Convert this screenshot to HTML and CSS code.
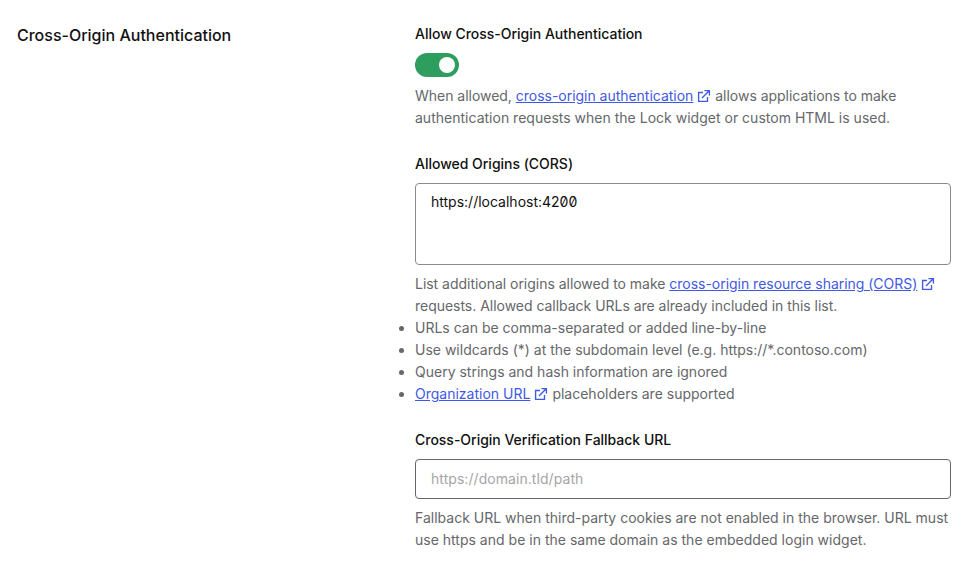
FILE: index.html
```html
<!DOCTYPE html>
<html lang="en">
<head>
<meta charset="utf-8">
<title>Cross-Origin Authentication</title>
<link rel="stylesheet" href="styles.css">
</head>
<body>
<svg width="0" height="0" class="defs"><symbol id="ext" viewBox="0 0 14 14"><path d="M6 3.5H1.6V12.4H10.5V8M7.5 1.6H12.4V6.5M12.2 1.8L5 9" fill="none" stroke="currentColor" stroke-width="1.35" stroke-linejoin="miter"/></symbol></svg>
<main class="section">
  <h2 class="title">Cross-Origin Authentication</h2>
  <div class="fields">
    <section class="field">
      <h3 class="label">Allow Cross-Origin Authentication</h3>
      <div class="switch"><span class="knob"></span></div>
      <p class="help tight">When allowed, <a href="#">cross-origin authentication</a><svg class="ext"><use href="#ext"/></svg>allows applications to make<br><span class="wide">authentication requests when the Lock widget or custom HTML is used.</span></p>
    </section>
    <section class="field">
      <label class="label" for="origins">Allowed Origins (CORS)</label>
      <textarea id="origins" class="input area" spellcheck="false">https://localhost:4200</textarea>
      <p class="help tight">List additional origins allowed to make <a href="#">cross-origin resource sharing (CORS)</a><svg class="ext"><use href="#ext"/></svg><br>requests. Allowed callback URLs are already included in this list.</p>
      <ul class="help list">
        <li>URLs can be comma-separated or added line-by-line</li>
        <li>Use wildcards (*) at the subdomain level (e.g. https://*.contoso.com)</li>
        <li>Query strings and hash information are ignored</li>
        <li><a href="#">Organization URL</a><svg class="ext"><use href="#ext"/></svg>placeholders are supported</li>
      </ul>
    </section>
    <section class="field">
      <label class="label" for="fallback">Cross-Origin Verification Fallback URL</label>
      <input id="fallback" class="input single" placeholder="https://domain.tld/path">
      <p class="help">Fallback URL when third-party cookies are not enabled in the browser. URL must<br><span class="wide">use https and be in the same domain as the embedded login widget.</span></p>
    </section>
  </div>
</main>
</body>
</html>
```
FILE: styles.css
```css
* { box-sizing: border-box; }
body { margin: 0; background: #fff; color: #111; font-family: Inter, sans-serif; font-size: 14px; line-height: 22px; }
.defs { display: block; height: 0; }
.section { display: grid; grid-template-columns: 398px 536px; padding: 23px 0 0 17px; }
.title { margin: 0; font-size: 16px; font-weight: 500; line-height: 24px; }
.fields { display: grid; gap: 24px; }
.label { display: block; margin: 0 0 8px; font-size: 14px; font-weight: 500; line-height: 22px; letter-spacing: -0.015px; }
.switch { display: flex; justify-content: flex-end; align-items: center; width: 44px; height: 24px; padding: 4px; border-radius: 12px; background: #2e9e5f; }
.knob { width: 16px; height: 16px; border-radius: 50%; background: #fff; }
.help { margin: 8px 0 0; color: #65676a; white-space: nowrap; }
.tight { letter-spacing: -0.025px; }
.wide { letter-spacing: 0.01px; }
.help a { color: #3f59e4; text-decoration: underline; }
.ext { width: 14px; height: 14px; margin: 0 4px; vertical-align: -2px; color: #3f59e4; }
.list { margin: 0; padding: 0; }
.input { display: block; width: 100%; height: 40px; padding: 0 15px; border: 1px solid #8b8b8f; border-radius: 4px; background: #fff; color: #111; font: 14px/22px Inter, sans-serif; outline: none; resize: none; }
.area { height: 82px; padding: 7px 15px; font-feature-settings: "zero"; }
.single { padding-bottom: 2px; border-color: #65676a; letter-spacing: 0.06px; }
.input::placeholder { color: #a5a5a7; }
```
